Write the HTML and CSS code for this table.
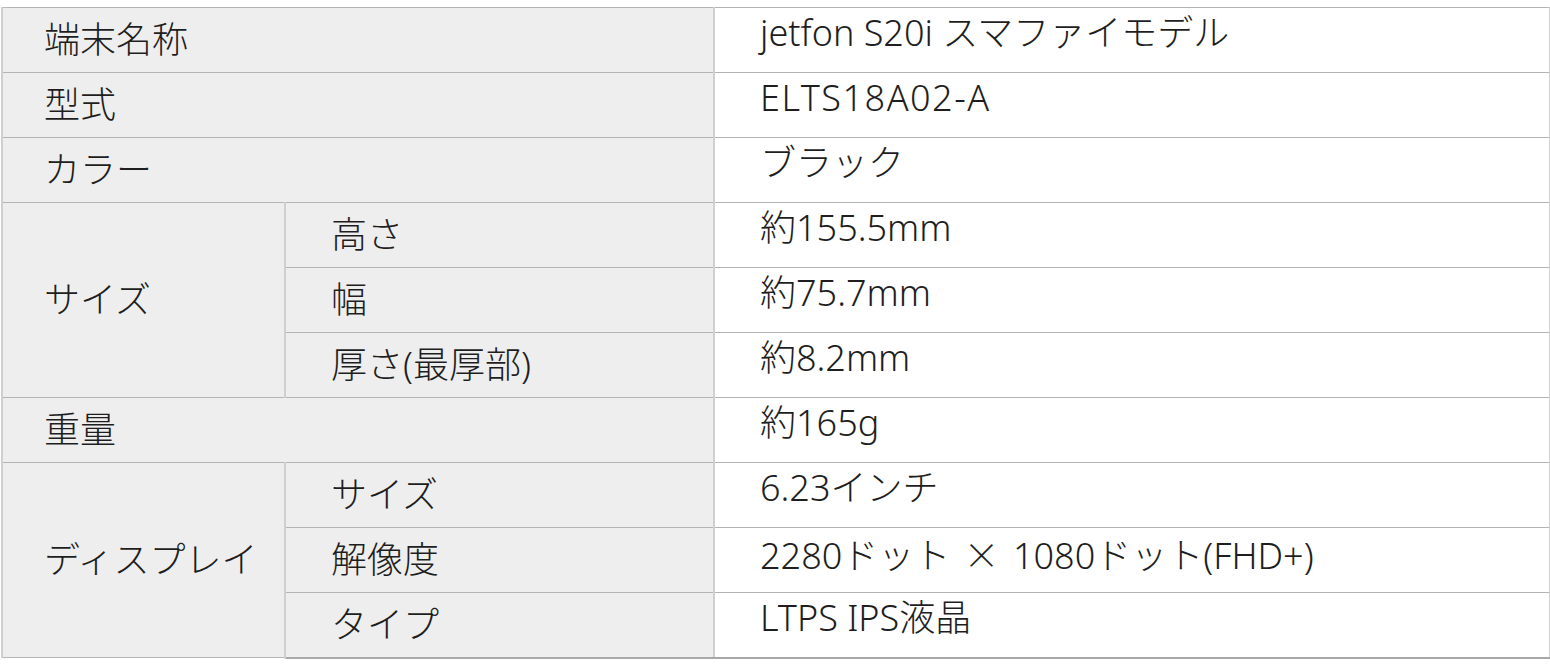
FILE: index.html
```html
<!DOCTYPE html>
<html lang="ja">
<head>
<meta charset="utf-8">
<link rel="stylesheet" href="styles.css">
</head>
<body>
<table class="spec">
  <colgroup>
    <col class="c1"><col class="c2"><col class="c3">
  </colgroup>
  <tr><th colspan="2">端末名称</th><td>jetfon S20i スマファイモデル</td></tr>
  <tr><th colspan="2">型式</th><td class="wide">ELTS18A02-A</td></tr>
  <tr><th colspan="2">カラー</th><td>ブラック</td></tr>
  <tr><th rowspan="3" class="group">サイズ</th><th class="sub">高さ</th><td>約155.5mm</td></tr>
  <tr><th class="sub">幅</th><td>約75.7mm</td></tr>
  <tr><th class="sub">厚さ(最厚部)</th><td>約8.2mm</td></tr>
  <tr><th colspan="2">重量</th><td>約165g</td></tr>
  <tr><th rowspan="3" class="group">ディスプレイ</th><th class="sub">サイズ</th><td>6.23インチ</td></tr>
  <tr><th class="sub">解像度</th><td>2280ドット <span class="times">×</span> 1080ドット(FHD+)</td></tr>
  <tr><th class="sub">タイプ</th><td>LTPS IPS液晶</td></tr>
</table>
</body>
</html>
```

FILE: styles.css
```css
html, body {
  margin: 0;
  padding: 0;
  background: #ffffff;
}

body {
  padding: 7px 0 0 1px;
  font-family: "Noto Sans", "Noto Sans CJK JP", sans-serif;
  font-weight: 300;
  color: #1e1e1e;
}

.spec {
  border-collapse: collapse;
  width: 1548px;
  table-layout: fixed;
  font-size: 36px;
  line-height: 36px;
}

.c1 { width: 283px; }
.c2 { width: 429px; }
.c3 { width: 836px; }

.spec th,
.spec td {
  height: 65px;
  box-sizing: border-box;
  padding: 0 0 0 41px;
  text-align: left;
  font-weight: 300;
  border-top: 1px solid #b4b4b4;
  border-bottom: 1px solid #b4b4b4;
  border-left: 2px solid #cfcfcf;
  border-right: 2px solid #cfcfcf;
  white-space: nowrap;
}

.spec th {
  background: #eeeeee;
  vertical-align: middle;
}

.spec th.sub {
  padding-left: 45px;
}

.spec td {
  background: #ffffff;
  vertical-align: top;
  padding-top: 7px;
  padding-left: 45px;
}

.spec td.wide {
  letter-spacing: 1.5px;
}

.times {
  font-family: "Noto Sans CJK JP", sans-serif;
  padding: 0 4px;
}

.spec tr:last-child th,
.spec tr:last-child td {
  border-bottom: 2px solid #a8a8a8;
}
```
